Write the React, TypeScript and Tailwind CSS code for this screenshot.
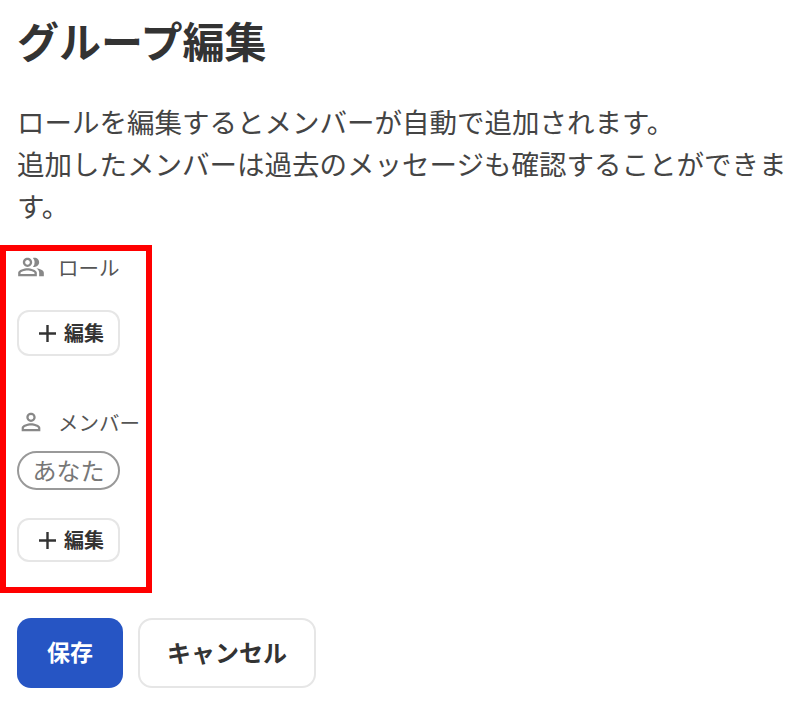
import { MdOutlinePeopleAlt, MdPersonOutline } from 'react-icons/md';

const fontStack = 'font-["Noto_Sans_CJK_JP","Noto_Sans",sans-serif]';

function EditButton({ className }: { className: string }) {
  return (
    <button className={`flex w-[103px] items-center justify-center gap-[7px] rounded-[12px] border-2 border-[#e6e6e6] bg-white pl-[5px] text-[20px] font-bold text-[#333] ${className}`}>
      <svg width="19" height="19" viewBox="0 0 19 19" className="shrink-0">
        <path d="M9.5 1v17M1 9.5h17" stroke="#333" strokeWidth="2.4" fill="none" />
      </svg>
      <span className="pb-[1px]">編集</span>
    </button>
  );
}

export default function App() {
  return (
    <div className={`h-[707px] w-[804px] overflow-hidden bg-white ${fontStack}`}>
      <div className="px-[17px] pt-[10px] text-[#333]">
        <h1 className="text-[42px] leading-[60px] font-bold">グループ編集</h1>
        <p className="mt-[30px] text-[27.5px] leading-[42px] text-[#444]">
          ロールを編集するとメンバーが自動で追加されます。
          <br />
          追加したメンバーは過去のメッセージも確認することができます。
        </p>
      </div>

      <div className="mt-[19px] h-[348px] w-[152px] border-[6px] border-[#ff0000] pl-[11px]">
        <div className="flex h-[30px] items-center gap-[13px] pt-[2px] text-[#555]">
          <MdOutlinePeopleAlt className="h-[28px] w-[28px] text-[#888]" />
          <span className="text-[20.5px]">ロール</span>
        </div>
        <EditButton className="mt-[29px] h-[46px]" />
        <div className="mt-[50px] flex h-[32px] items-center gap-[13px] text-[#555]">
          <MdPersonOutline className="h-[28px] w-[28px] text-[#888]" />
          <span className="text-[20.5px] whitespace-nowrap">メンバー</span>
        </div>
        <div className="mt-[13px] flex h-[39px] w-[103px] items-center justify-center rounded-full border-2 border-[#999] pb-[1px] text-[24px] text-[#777]">
          あなた
        </div>
        <EditButton className="mt-[28px] h-[44px]" />
      </div>

      <div className="mt-[25px] flex gap-[15px] pl-[17px]">
        <button className="h-[70px] w-[106px] rounded-[14px] bg-[#2655c4] pb-[3px] text-[23px] font-bold text-white">保存</button>
        <button className="h-[70px] w-[178px] rounded-[14px] border-2 border-[#e6e6e6] bg-white pb-[3px] text-[24px] font-bold text-[#333]">キャンセル</button>
      </div>
    </div>
  );
}
